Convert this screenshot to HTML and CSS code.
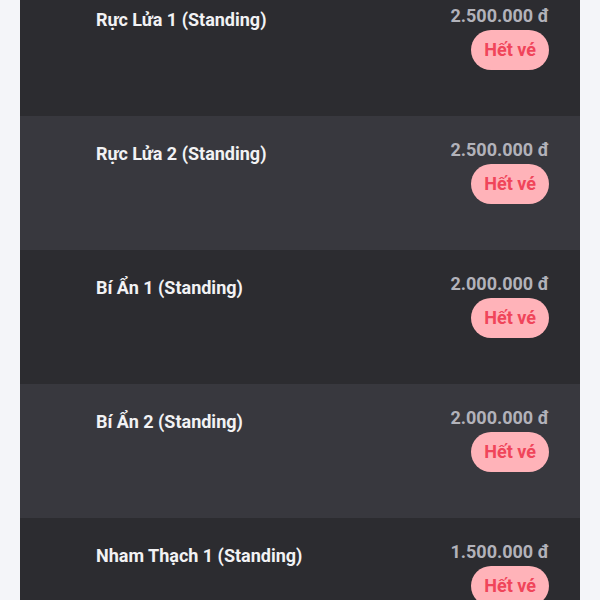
FILE: index.html
```html
<!DOCTYPE html>
<html lang="vi">
<head>
    <meta charset="UTF-8">
    <title>Chọn vé</title>
    <link rel="stylesheet" href="styles.css">
</head>
<body>
<div class="ticket-list">
    <div class="ticket">
        <div class="ticket-name">Rực Lửa 1 (Standing)</div>
        <div class="ticket-side">
            <div class="ticket-price">2.500.000 đ</div>
            <span class="sold-out">Hết vé</span>
        </div>
    </div>
    <div class="ticket">
        <div class="ticket-name">Rực Lửa 2 (Standing)</div>
        <div class="ticket-side">
            <div class="ticket-price">2.500.000 đ</div>
            <span class="sold-out">Hết vé</span>
        </div>
    </div>
    <div class="ticket">
        <div class="ticket-name">Bí Ẩn 1 (Standing)</div>
        <div class="ticket-side">
            <div class="ticket-price">2.000.000 đ</div>
            <span class="sold-out">Hết vé</span>
        </div>
    </div>
    <div class="ticket">
        <div class="ticket-name">Bí Ẩn 2 (Standing)</div>
        <div class="ticket-side">
            <div class="ticket-price">2.000.000 đ</div>
            <span class="sold-out">Hết vé</span>
        </div>
    </div>
    <div class="ticket">
        <div class="ticket-name">Nham Thạch 1 (Standing)</div>
        <div class="ticket-side">
            <div class="ticket-price">1.500.000 đ</div>
            <span class="sold-out">Hết vé</span>
        </div>
    </div>
</div>
</body>
</html>
```

FILE: styles.css
```css
body {
    margin: 0;
    background: #f4f5f9;
    font-family: Roboto, "Liberation Sans", sans-serif;
    font-weight: bold;
    font-size: 18px;
}

.ticket-list {
    margin: -18px 20px 0;
    background: #2c2c30;
}

.ticket {
    display: flex;
    justify-content: space-between;
    align-items: flex-start;
    height: 134px;
    box-sizing: border-box;
    padding: 0 31px 0 76px;
    background: #2c2c30;
}

.ticket:nth-child(even) {
    background: #38383e;
}

.ticket-name {
    padding-top: 25px;
    line-height: 26px;
    color: #f2f2f4;
}

.ticket-side {
    display: flex;
    flex-direction: column;
    align-items: flex-end;
    gap: 1px;
    padding-top: 21px;
}

.ticket-price {
    line-height: 26px;
    color: #b2b2ba;
}

.sold-out {
    display: inline-block;
    height: 40px;
    line-height: 40px;
    padding: 0 13px;
    border-radius: 20px;
    background: #ffb3b9;
    color: #f0455a;
}
```
